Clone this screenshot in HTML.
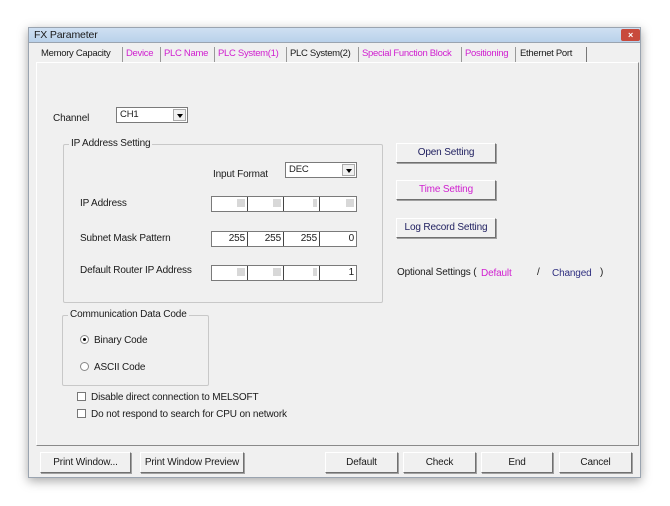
<!DOCTYPE html>
<html><head><style>
*{box-sizing:border-box;margin:0;padding:0}
body{width:670px;height:506px;background:#fff;position:relative;overflow:hidden;font-family:"Liberation Sans",sans-serif;font-size:10px;color:#1a1a1a;letter-spacing:-0.15px}
.a{position:absolute;white-space:nowrap}
.win{position:absolute;left:28px;top:27px;width:613px;height:451px;background:#f0f0f0;border:1px solid #9aa4b0;box-shadow:0 3px 10px rgba(0,0,0,.35)}
.title{position:absolute;left:28px;top:27px;width:613px;height:16px;background:linear-gradient(#cfe0f2,#b9d1ea);border:1px solid #9aa4b0}
.btn{position:absolute;background:#f0f0f0;border:1px solid #fff;border-right-color:#707070;border-bottom-color:#707070;box-shadow:1px 1px 0 #a0a0a0;text-align:center;font-size:10px}
.combo{position:absolute;background:#fff;border:1px solid #7a7a7a;height:16px;font-size:9.5px;padding:1px 3px}
.combo i{position:absolute;right:1px;top:1px;width:13px;height:12px;background:#f0f0f0;border:1px solid #aaa}
.combo i:after{content:"";position:absolute;left:3px;top:4px;border:3px solid transparent;border-top:4px solid #000}
.ip{position:absolute;background:#fff;border:1px solid #7a7a7a;height:16px;width:146px}
.ip span{position:absolute;top:0;height:14px;width:36px;border-right:1px solid #444;text-align:right;padding-right:2px;font-size:10px;line-height:14px}
.grp{position:absolute;border:1px solid #c8c8c8;border-radius:2px}
.grp b{position:absolute;top:-7px;left:5px;background:#f0f0f0;padding:0 2px;font-weight:normal}
.tab{position:absolute;top:47px;height:15px;line-height:14px;font-size:9.5px;letter-spacing:-0.3px;border-left:1px solid #999;padding-left:3px}
.m{color:#d020d0}
.blur{background:#d8d8d8;display:inline-block;width:8px;height:8px;vertical-align:middle}
</style></head><body>
<div class="win"></div>
<div class="title"></div>
<div class="a" style="left:34px;top:29px;font-size:10.5px">FX Parameter</div>
<div class="a" style="left:621px;top:29px;width:19px;height:12px;background:#c84a3c;border-radius:2px;color:#fff;font-size:9px;text-align:center;line-height:12px;font-weight:bold">×</div>
<div class="a" style="left:36px;top:62px;width:603px;height:384px;border:1px solid #8a8a8a;border-top-color:#fff;border-left-color:#fff"></div>
<div class="tab" style="left:38px;border:none">Memory Capacity</div>
<div class="tab m" style="left:122px">Device</div>
<div class="tab m" style="left:160px">PLC Name</div>
<div class="tab m" style="left:214px">PLC System(1)</div>
<div class="tab" style="left:286px">PLC System(2)</div>
<div class="tab m" style="left:358px">Special Function Block</div>
<div class="tab m" style="left:461px">Positioning</div>
<div class="tab" style="left:515px;width:72px;border-right:1px solid #777;padding-left:4px;background:#f0f0f0">Ethernet Port</div>

<div class="a" style="left:53px;top:113px">Channel</div>
<div class="combo" style="left:116px;top:107px;width:72px">CH1<i></i></div>

<div class="grp" style="left:63px;top:144px;width:320px;height:159px"><b>IP Address Setting</b></div>
<div class="a" style="left:213px;top:169px">Input Format</div>
<div class="combo" style="left:285px;top:162px;width:72px">DEC<i></i></div>
<div class="a" style="left:80px;top:198px">IP Address</div>
<div class="ip" style="left:211px;top:196px"><span style="left:0"><i class="blur"></i></span><span style="left:36px"><i class="blur"></i></span><span style="left:72px"><i class="blur" style="width:4px"></i></span><span style="left:108px;border:none"><i class="blur"></i></span></div>
<div class="a" style="left:80px;top:233px">Subnet Mask Pattern</div>
<div class="ip" style="left:211px;top:231px"><span style="left:0">255</span><span style="left:36px">255</span><span style="left:72px">255</span><span style="left:108px;border:none">0</span></div>
<div class="a" style="left:80px;top:265px">Default Router IP Address</div>
<div class="ip" style="left:211px;top:265px"><span style="left:0"><i class="blur"></i></span><span style="left:36px"><i class="blur"></i></span><span style="left:72px"><i class="blur" style="width:4px"></i></span><span style="left:108px;border:none">1</span></div>

<div class="btn" style="left:396px;top:143px;width:100px;height:20px;line-height:18px;color:#202060">Open Setting</div>
<div class="btn m" style="left:396px;top:180px;width:100px;height:20px;line-height:18px">Time Setting</div>
<div class="btn" style="left:396px;top:218px;width:100px;height:20px;line-height:18px;color:#202060">Log Record Setting</div>
<div class="a" style="left:397px;top:267px">Optional Settings (</div>
<div class="a m" style="left:481px;top:268px">Default</div>
<div class="a" style="left:537px;top:267px">/</div>
<div class="a" style="left:552px;top:268px;color:#303080">Changed</div>
<div class="a" style="left:600px;top:267px">)</div>

<div class="grp" style="left:62px;top:315px;width:147px;height:71px"><b>Communication Data Code</b></div>
<div class="a" style="left:80px;top:335px;width:9px;height:9px;border-radius:50%;border:1px solid #888;background:#fff"><div style="position:absolute;left:2px;top:2px;width:3px;height:3px;border-radius:50%;background:#000"></div></div>
<div class="a" style="left:94px;top:335px">Binary Code</div>
<div class="a" style="left:80px;top:362px;width:9px;height:9px;border-radius:50%;border:1px solid #888;background:#fff"></div>
<div class="a" style="left:94px;top:362px">ASCII Code</div>
<div class="a" style="left:77px;top:392px;width:9px;height:9px;border:1px solid #777;background:#fff"></div>
<div class="a" style="left:91px;top:392px">Disable direct connection to MELSOFT</div>
<div class="a" style="left:77px;top:409px;width:9px;height:9px;border:1px solid #777;background:#fff"></div>
<div class="a" style="left:91px;top:409px">Do not respond to search for CPU on network</div>

<div class="btn" style="left:40px;top:452px;width:91px;height:21px;line-height:19px">Print Window...</div>
<div class="btn" style="left:140px;top:452px;width:104px;height:21px;line-height:19px">Print Window Preview</div>
<div class="btn" style="left:325px;top:452px;width:73px;height:21px;line-height:19px">Default</div>
<div class="btn" style="left:403px;top:452px;width:73px;height:21px;line-height:19px">Check</div>
<div class="btn" style="left:481px;top:452px;width:72px;height:21px;line-height:19px">End</div>
<div class="btn" style="left:559px;top:452px;width:73px;height:21px;line-height:19px">Cancel</div>
</body></html>
